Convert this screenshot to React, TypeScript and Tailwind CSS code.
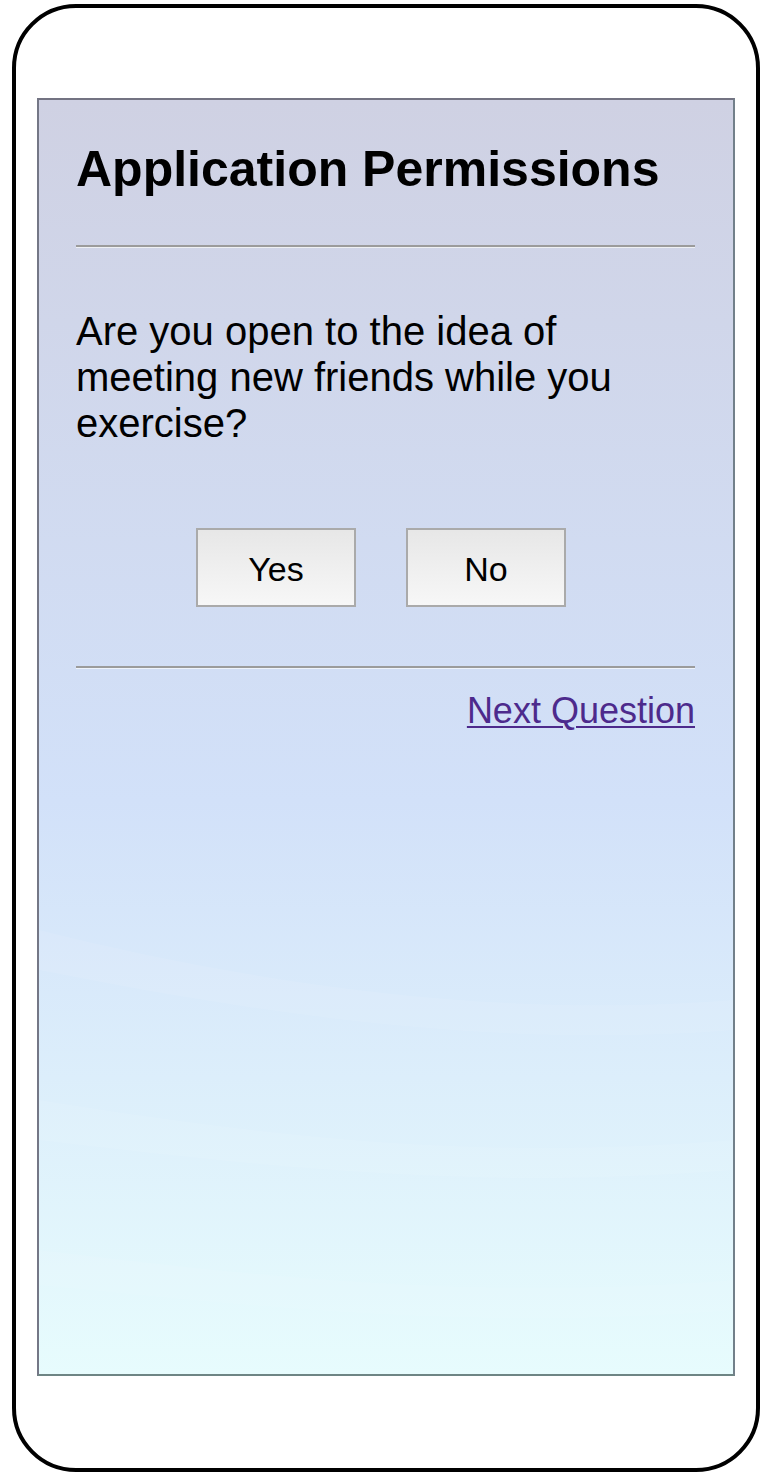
import React from "react";

export default function App() {
  return (
    <div
      className="w-[770px] h-[1482px] bg-white overflow-hidden"
      style={{ fontFamily: '"Liberation Sans", Arial, Helvetica, sans-serif' }}
    >
      <div className="ml-[12px] mt-[4px] w-[748px] h-[1468px] border-[4px] border-black rounded-[64px] bg-white pt-[90px] px-[21px]">
        <div className="relative h-[1278px] border-2 border-t-[#737382] border-l-[#747786] border-r-[#72808a] border-b-[#6e8584] bg-gradient-to-b from-[#cfd1e3] via-[#d2e1f9] via-55% to-[#e7fcfd] overflow-hidden">
          <svg
            className="absolute inset-0 w-full h-full pointer-events-none"
            viewBox="0 0 694 1274"
            preserveAspectRatio="none"
          >
            <path d="M0 830 C 200 880, 450 920, 694 900 L 694 930 C 450 950, 200 910, 0 870 Z" fill="#ffffff" opacity="0.08" />
            <path d="M0 1000 C 250 1040, 450 1060, 694 1040 L 694 1070 C 450 1090, 250 1070, 0 1040 Z" fill="#ffffff" opacity="0.08" />
            <path d="M0 1150 C 250 1180, 450 1200, 694 1180 L 694 1210 C 450 1230, 250 1210, 0 1185 Z" fill="#ffffff" opacity="0.07" />
          </svg>
          <div className="relative pl-[37px] pr-[38px] pt-[44px]">
            <h1 className="text-[50px] leading-[50px] font-bold text-black whitespace-nowrap">
              Application Permissions
            </h1>
            <div className="mt-[51px] border-t-2 border-t-[#9b9b9b] border-b border-b-[#eef0f4]" />
            <p className="mt-[60px] text-[40px] leading-[46px] text-black">
              Are you open to the idea of meeting new friends while you exercise?
            </p>
            <div className="mt-[82px] flex gap-[50px] pl-[120px]">
              <button className="w-[160px] h-[79px] pt-[3px] border-2 border-[#aaaaaa] bg-gradient-to-b from-[#e7e7e7] to-[#f7f7f7] text-[34px] text-black">
                Yes
              </button>
              <button className="w-[160px] h-[79px] pt-[3px] border-2 border-[#aaaaaa] bg-gradient-to-b from-[#e7e7e7] to-[#f7f7f7] text-[34px] text-black">
                No
              </button>
            </div>
            <div className="mt-[59px] border-t-2 border-t-[#9b9b9b] border-b border-b-[#eef3fb]" />
            <div className="mt-[21px] flex justify-end">
              <a href="#" className="text-[36px] leading-[42px] text-[#4d2a8c] underline decoration-2 underline-offset-[3px]">
                Next Question
              </a>
            </div>
          </div>
        </div>
      </div>
    </div>
  );
}
